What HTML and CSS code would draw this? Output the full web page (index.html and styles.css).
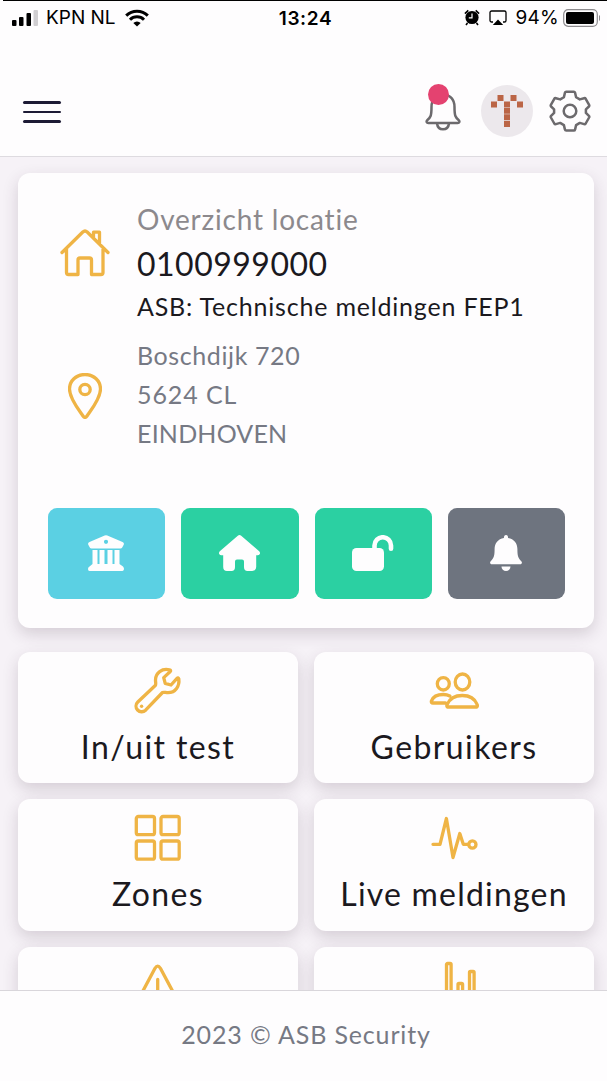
FILE: index.html
```html
<!DOCTYPE html>
<html lang="nl">
<head>
    <meta charset="utf-8">
    <meta name="viewport" content="width=device-width, initial-scale=1.0">
    <title>ASB Security</title>
    <link rel="stylesheet" href="styles.css">
</head>
<body>
    <header class="header">
        <div class="statusBar">
            <div class="statusLeft">
                <svg class="signal" width="28" height="18" viewBox="0 0 28 18">
                    <rect x="1" y="11" width="4.5" height="6" rx="1"/>
                    <rect x="8" y="8" width="4.5" height="9" rx="1"/>
                    <rect x="15.5" y="4" width="4.5" height="13" rx="1"/>
                    <rect x="22.5" y="1" width="4.5" height="16" rx="1" fill="#d0ced1"/>
                </svg>
                <span class="carrier">KPN NL</span>
                <svg class="wifi" width="24" height="18" viewBox="0 0 24 18" fill="none" stroke="#000" stroke-width="3">
                    <path d="M1.2 6.6a15.4 15.4 0 0 1 21.6 0"/>
                    <path d="M5 10.7a10 10 0 0 1 14 0"/>
                    <path d="M8.3 14a5.3 5.3 0 0 1 7.4 0L12 17.5z" fill="#000" stroke="none"/>
                </svg>
            </div>
            <span class="clock">13:24</span>
            <div class="statusRight">
                <svg width="16" height="17" viewBox="0 0 16 17">
                    <circle cx="8" cy="8.5" r="6.6"/>
                    <path d="M.9 4.6 4.3 1.4M11.7 1.4l3.4 3.2M3.5 14 2 16M12.5 14l1.5 2" stroke="#000" stroke-width="1.6"/>
                    <path d="M8 4.5v4.3H4.8" stroke="#fff" stroke-width="1.2" fill="none"/>
                </svg>
                <svg class="airplay" width="18" height="16" viewBox="0 0 18 16">
                    <path d="M4 12H2.6A1.6 1.6 0 0 1 1 10.4V2.6A1.6 1.6 0 0 1 2.6 1h12.8A1.6 1.6 0 0 1 17 2.6v7.8a1.6 1.6 0 0 1-1.6 1.6H14" fill="none" stroke="#000" stroke-width="1.3"/>
                    <path d="m9 9.5 5.2 5.5H3.8z"/>
                </svg>
                <span class="percent">94%</span>
                <svg class="battery" width="37" height="18" viewBox="0 0 37 18">
                    <rect x=".7" y=".7" width="33.6" height="16.6" rx="4.5" fill="none" stroke="#8c8a8d" stroke-width="1.2"/>
                    <rect x="3" y="3" width="28" height="12" rx="2"/>
                    <path d="M36 6.2a3 3 0 0 1 0 5.6z" fill="#8c8a8d"/>
                </svg>
            </div>
        </div>
        <nav class="navBar">
            <div class="menuButton">
                <span></span>
                <span></span>
                <span></span>
            </div>
            <div class="navIcons">
                <div class="bellWrap">
                    <svg width="36" height="40" viewBox="0 0 36 40" fill="none" stroke="#6c6a6d" stroke-width="2.5" stroke-linejoin="round">
                        <path d="M18 3.5c-7 0-11.500 5-11.500 12.500 0 9-1 10.500-4.300 13.200-1.100 1.300-.6 2.800 1.100 2.800h29.400c1.700 0 2.200-1.500 1.100-2.800C30.500 26.500 29.500 25 29.500 16 29.500 8.500 25 3.500 18 3.500z"/>
                        <path d="M12 32.500c.5 4 3 5.800 6 5.800s5.500-1.800 6-5.800"/>
                    </svg>
                    <span class="badge"></span>
                </div>
                <div class="avatar">
                    <svg width="32" height="32" viewBox="0 0 32 32" fill="#bb6546">
                        <path d="M6.500 0h6v6h-6zM19.500 0h6v6h-6zM0 6.500h6v6H0zM13 6.500h6v6h-6zM26 6.500h6v6h-6zM13 13h6v5.700h-6zM13 19.300h6V25h-6zM13 25.800h6V32h-6z"/>
                    </svg>
                </div>
                <svg class="gear" width="42" height="42" viewBox="0 0 42 42" fill="none" stroke="#6c6a6d" stroke-width="2.5" stroke-linejoin="round">
                    <path d="M17.200 1.700h7.600q1 0 1.300 1.200l1 4.300 3.700 2.200 4.300-1.200q1-.3 1.600.6l3.400 6q.5 1-.2 1.700l-3 2.900v3.500l3 2.900q.7.700.2 1.700l-3.400 6q-.6.900-1.600.6l-4.300-1.200-3.700 2.200-1 4.300q-.3 1.200-1.300 1.200h-7.600q-1 0-1.300-1.200l-1-4.300-3.700-2.200-4.300 1.200q-1 .3-1.600-.6l-3.400-6q-.5-1 .2-1.700l3-2.900v-3.500l-3-2.900q-.7-.7-.2-1.700l3.400-6q.6-.9 1.600-.6l4.300 1.200 3.700-2.200 1-4.300q.3-1.200 1.300-1.200z"/>
                    <circle cx="21" cy="21" r="6.3"/>
                </svg>
            </div>
        </nav>
    </header>

    <main class="content">
        <section class="locationCard">
            <div class="infoRow">
                <svg class="houseIcon" width="50" height="48" viewBox="0 0 50 48">
                    <path d="M2 23.500 22.800 3q2.200-2 4.400 0L48 23.500M6.500 20v23.500q0 2 2 2H18V31q0-2 2-2h9.500q2 0 2 2v14.500H41q2 0 2-2V20M33.500 8V3.200h6V15"/>
                </svg>
                <div>
                    <h4 class="overview">Overzicht locatie</h4>
                    <h3 class="number">0100999000</h3>
                    <h5 class="locationName">ASB: Technische meldingen FEP1</h5>
                </div>
            </div>
            <div class="infoRow addressRow">
                <svg class="pinIcon" width="34" height="46" viewBox="0 0 34 46">
                    <path d="M17 1.500C8 1.500 1.500 8 1.500 16c0 9.500 9 20.500 13.500 27q2 3 4 0c4.500-6.500 13.500-17.500 13.500-27C32.500 8 26 1.500 17 1.500z"/>
                    <circle cx="17" cy="16.500" r="5.200"/>
                </svg>
                <p class="address"><span class="street">Boschdijk 720</span><br><span class="postcode">5624 CL</span><br><span class="city">EINDHOVEN</span></p>
            </div>
            <div class="actions">
                <div class="action info">
                    <svg width="36" height="36" viewBox="0 0 36 36">
                        <path fill-rule="evenodd" d="M16.700.5q1.300-.6 2.600 0L34.500 7q2 1 1.200 2.800l-1.500 2.800q-.6 1-1.700 1h-29q-1.100 0-1.700-1L.3 9.800Q-.5 8 1.500 7zM18 4.700a2.100 2.100 0 1 0 0 4.200 2.100 2.100 0 0 0 0-4.200z"/>
                        <path d="M4.500 15h5v14h2V15h5v14h3V15h5v14h2V15h5v14l3.500 2.500Q36 32.500 36 34t-1.500 2h-33Q0 36 0 34t1.500-2.500l3-2.500z"/>
                    </svg>
                </div>
                <div class="action success">
                    <svg width="41" height="36" viewBox="0 0 41 36">
                        <path d="M18.800.7q1.700-1.400 3.400 0l18 15.600q1.600 1.700.2 3.200-.5.700-1.700.7h-1.500V32q0 4-4 4h-4.700Q25 36 25 32v-5.500q0-2-2-2h-5q-2 0-2 2V32q0 4-3.500 4H8q-3.800 0-3.800-4V20.200H2.300q-1.200 0-1.700-.7-1.400-1.500.2-3.200z"/>
                    </svg>
                </div>
                <div class="action success">
                    <svg width="42" height="36" viewBox="0 0 42 36">
                        <rect x="0" y="13" width="32" height="23" rx="4.5"/>
                        <path d="M22.500 15V10.500a8 8 0 0 1 16.500 0v3.200" fill="none" stroke="#fefdfe" stroke-width="4.6" stroke-linecap="round"/>
                    </svg>
                </div>
                <div class="action secondary">
                    <svg width="32" height="36" viewBox="0 0 32 36">
                        <path d="M16 0q2.100 0 2.100 3C24 4 27.400 8.500 27.400 14c0 6 .5 9 3.900 12.300 1.300 1.400.5 3-1.300 3H2c-1.800 0-2.600-1.600-1.300-3C4.100 23 4.600 20 4.600 14 4.600 8.500 8 4 13.900 3Q13.900 0 16 0z"/>
                        <path d="M11.500 31.500h9a4.500 4.500 0 0 1-9 0z"/>
                    </svg>
                </div>
            </div>
        </section>

        <section class="tiles">
            <div class="tile">
                <svg width="50" height="48" viewBox="0 -1.500 50 48">
                    <path d="M36.500 2.400C29 .5 22.500 5.500 22.500 12.500c0 2.500.6 3.500 0 5.200L4.800 34.500a5.500 5.500 0 0 0 7.800 8.200L29.500 25c1.500-.7 3 .2 5.500.2 7.500 0 11.800-6.700 10.800-13.900q-.6-1.700-1.800-.4L38 17.500l-5.800-1.700-1.500-5.700L37.300 4q1-1.100-.8-1.600z"/>
                    <circle cx="8.600" cy="38.800" r="1.700" class="dot"/>
                </svg>
                <span class="tileLabel">In/uit test</span>
            </div>
            <div class="tile">
                <svg width="50" height="48" viewBox="0 -2.500 50 48">
                    <ellipse cx="14.300" cy="15.300" rx="6" ry="6.200"/>
                    <ellipse cx="33.500" cy="13.500" rx="7.300" ry="8"/>
                    <path d="M16.500 34.500H4q-2.200 0-1.500-2.200C4 28.500 8 26 14.300 26q3.700 0 6.500 1.500M18.300 38.500h29.500q1-1 .3-2.600C45.700 30 40.500 27 33.300 27S20.700 30 18.200 35.900q-.8 1.600.1 2.600z"/>
                </svg>
                <span class="tileLabel">Gebruikers</span>
            </div>
            <div class="tile">
                <svg width="50" height="48" viewBox="0 -1 50 48">
                    <rect x="3.300" y="2.500" width="18.200" height="18.200" rx="2"/>
                    <rect x="28" y="2.500" width="18.200" height="18.200" rx="2"/>
                    <rect x="3.300" y="27" width="18.200" height="18.200" rx="2"/>
                    <rect x="28" y="27" width="18.200" height="18.200" rx="2"/>
                </svg>
                <span class="tileLabel">Zones</span>
            </div>
            <div class="tile">
                <svg width="50" height="48" viewBox="0 -1 50 48">
                    <path d="M4 30.300h7L17.400 4.500 24 43.500l6.800-24 3.500 10.800h4.500"/>
                    <circle cx="43.400" cy="30.500" r="3.600"/>
                </svg>
                <span class="tileLabel live">Live meldingen</span>
            </div>
            <div class="tile">
                <svg width="50" height="48" viewBox="0 -2 50 48">
                    <path d="M22 5.300q2.700-4.300 5.400 0L46.500 41q1 3.500-2.500 3.500H5.500Q2 44.500 3 41zM24.700 16.500v15M24.700 38v.5"/>
                </svg>
            </div>
            <div class="tile">
                <svg width="50" height="48" viewBox="0 0 50 48">
                    <rect x="17.500" y="2.500" width="4.600" height="43" rx="1"/>
                    <rect x="29" y="22.500" width="4.600" height="23" rx="1"/>
                    <rect x="40.500" y="10.500" width="4.600" height="35" rx="1"/>
                </svg>
            </div>
        </section>
    </main>

    <footer class="footer">2023 © ASB Security</footer>
</body>
</html>
```
FILE: styles.css
```css
* {
    box-sizing: border-box;
}
body {
    margin: 0;
    height: 100vh;
    display: flex;
    flex-direction: column;
    overflow: hidden;
    background-color: #f6f2f7;
    font-family: Lato, "Open Sans", sans-serif;
    color: #1b191e;
}
svg {
    display: block;
    flex: none;
}
h3, h4, h5, p {
    margin: 0;
    font-weight: 400;
    white-space: nowrap;
}
.header {
    flex: none;
    height: 157px;
    background-color: #fefdfe;
    border-bottom: 1px solid #dedbe0;
}
.statusBar {
    display: grid;
    grid-template-columns: 1fr auto 1fr;
    align-items: center;
    height: 35px;
    margin-left: 3px;
    padding: 0 7px 0 8px;
    border-top: 1px solid #000;
    font-family: Inter, sans-serif;
    font-size: 19px;
    color: #000;
}
.statusLeft, .statusRight {
    display: flex;
    align-items: center;
    margin-top: -1px;
}
.statusRight {
    justify-content: flex-end;
}
.carrier {
    margin-left: 7px;
    font-size: 19px;
}
.wifi {
    margin-left: 9px;
}
.clock {
    font-weight: 600;
    font-size: 19px;
    letter-spacing: 0.6px;
}
.airplay {
    margin: 1px 8px 0 9px;
}
.percent {
    margin-right: 4px;
    letter-spacing: 0.3px;
}
.navBar {
    display: flex;
    justify-content: space-between;
    align-items: center;
    height: 52px;
    margin-top: 50px;
    padding: 0 16px 0 23px;
}
.menuButton {
    display: flex;
    flex-direction: column;
    gap: 7px;
    width: 38px;
    margin-top: 2px;
}
.menuButton span {
    height: 2.5px;
    border-radius: 2px;
    background-color: #1d1b35;
}
.navIcons {
    display: flex;
    align-items: center;
}
.bellWrap {
    position: relative;
    margin-right: 20px;
}
.badge {
    position: absolute;
    top: -7px;
    left: 3px;
    width: 21px;
    height: 21px;
    border-radius: 50%;
    background-color: #e44270;
}
.avatar {
    display: flex;
    justify-content: center;
    align-items: center;
    width: 52px;
    height: 52px;
    margin-right: 16px;
    border-radius: 50%;
    background-color: #ece8ec;
}
.content {
    flex: 1;
    min-height: 0;
    overflow: hidden;
    padding: 16px 13px 0 18px;
}
.locationCard, .tile {
    background-color: #fefdfe;
    border-radius: 12px;
    box-shadow: 0 6px 16px rgba(60, 40, 60, 0.18);
}
.locationCard {
    height: 455px;
    padding: 28px 29px 0 30px;
}
.infoRow {
    display: grid;
    grid-template-columns: 74px 1fr;
    column-gap: 15px;
    justify-items: center;
    align-items: center;
}
.infoRow > div, .infoRow > p {
    justify-self: start;
}
.infoRow svg, .tile svg {
    fill: none;
    stroke: #efb445;
    stroke-width: 3.3;
    stroke-linecap: round;
    stroke-linejoin: round;
}
.infoRow .houseIcon {
    margin-bottom: 18px;
}
.infoRow .pinIcon {
    margin-top: 2px;
}
.overview {
    font-size: 28px;
    line-height: 36px;
    letter-spacing: 0.8px;
    color: #8c898d;
}
.number {
    font-size: 32px;
    line-height: 54px;
    letter-spacing: 0.5px;
}
.locationName {
    font-size: 25px;
    line-height: 31px;
    letter-spacing: 0.8px;
}
.addressRow {
    margin-top: 14px;
}
.address {
    font-size: 25px;
    line-height: 39px;
    color: #767984;
}
.street {
    letter-spacing: 0.6px;
}
.postcode {
    letter-spacing: 0.9px;
}
.city {
    letter-spacing: 0.2px;
}
.actions {
    display: grid;
    grid-template-columns: repeat(4, 1fr);
    gap: 16px;
    margin-top: 55px;
}
.action {
    display: flex;
    justify-content: center;
    align-items: center;
    height: 91px;
    padding: 0 1px 1px 0;
    border-radius: 9px;
    fill: #fefdfe;
}
.info {
    background-color: #5bd0e3;
}
.success {
    background-color: #2bd0a2;
}
.secondary {
    background-color: #6e747f;
}
.tiles {
    display: grid;
    grid-template-columns: 1fr 1fr;
    gap: 16px;
    margin-top: 24px;
}
.tile {
    display: flex;
    flex-direction: column;
    align-items: center;
    height: 131.3px;
    padding-top: 14px;
}
.tile .dot {
    fill: #efb445;
    stroke: none;
}
.tileLabel {
    margin-top: 13px;
    font-size: 32px;
    line-height: 40px;
    letter-spacing: 1.4px;
    white-space: nowrap;
}
.live {
    letter-spacing: 1.2px;
}
.footer {
    flex: none;
    height: 91px;
    border-top: 1px solid #d9d6db;
    background-color: #fefdfe;
    text-align: center;
    font-size: 25px;
    line-height: 87px;
    letter-spacing: 0.85px;
    padding-left: 5px;
    color: #767984;
}
```
